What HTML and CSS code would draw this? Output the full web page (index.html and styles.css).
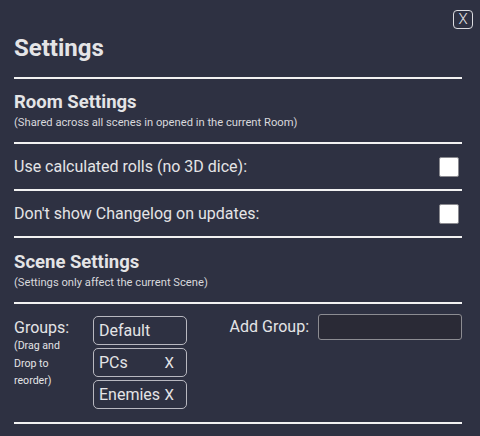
FILE: index.html
```html
<!DOCTYPE html>
<html>
<head>
<meta charset="utf-8">
<link rel="stylesheet" href="styles.css">
</head>
<body>
<div class="panel">
  <button class="close">X</button>
  <h1 class="title">Settings</h1>
  <div class="divider"></div>
  <div class="section-head">
    <h2 class="section-title">Room Settings</h2>
    <div class="section-sub">(Shared across all scenes in opened in the current Room)</div>
  </div>
  <div class="divider"></div>
  <div class="row">
    <span class="row-label">Use calculated rolls (no 3D dice):</span>
    <span class="checkbox"></span>
  </div>
  <div class="divider"></div>
  <div class="row">
    <span class="row-label">Don't show Changelog on updates:</span>
    <span class="checkbox"></span>
  </div>
  <div class="divider"></div>
  <div class="section-head scene">
    <h2 class="section-title">Scene Settings</h2>
    <div class="section-sub">(Settings only affect the current Scene)</div>
  </div>
  <div class="divider"></div>
  <div class="groups-row">
    <div class="groups-label">
      <div class="groups-main">Groups:</div>
      <div class="groups-hint">(Drag and<br>Drop to<br>reorder)</div>
    </div>
    <div class="group-list">
      <div class="group">Default</div>
      <div class="group"><span>PCs</span><span class="group-x">X</span></div>
      <div class="group"><span>Enemies</span><span class="group-x">X</span></div>
    </div>
    <div class="add-group">
      <span class="add-label">Add Group:</span>
      <span class="add-input"></span>
    </div>
  </div>
  <div class="divider"></div>
</div>
</body>
</html>
```

FILE: styles.css
```css
html, body {
  margin: 0;
  padding: 0;
  background: #2e3142;
  width: 480px;
  height: 436px;
  overflow: hidden;
}
body {
  font-family: Roboto, "Liberation Sans", sans-serif;
  color: #e4e4e6;
}
.panel {
  position: relative;
  padding: 34px 18px 0 14px;
}
.close {
  position: absolute;
  top: 10px;
  right: 7px;
  width: 20px;
  height: 19px;
  padding: 0;
  margin: 0;
  background: transparent;
  border: 1px solid #dcdce0;
  border-radius: 4px;
  color: #e4e4e6;
  font-family: Roboto, sans-serif;
  font-size: 15px;
  font-weight: 300;
  line-height: 17px;
  text-align: center;
}
.title {
  margin: 0;
  font-size: 24px;
  font-weight: 700;
  line-height: 28px;
  height: 28px;
  margin-bottom: 15px;
}
.divider {
  height: 2px;
  background: #f2f2f2;
}
.section-head {
  padding: 12px 0 13px;
}
.section-head.scene {
  padding-top: 13px;
}
.section-title {
  margin: 0;
  font-size: 18.5px;
  font-weight: 700;
  line-height: 22px;
}
.section-sub {
  margin-top: 3px;
  font-size: 11.2px;
  line-height: 13px;
  color: #d8d8dc;
}
.row {
  display: flex;
  align-items: center;
  justify-content: space-between;
  height: 45px;
  padding-right: 3px;
}
.row-label {
  font-size: 16px;
  line-height: 19px;
}
.checkbox {
  width: 18px;
  height: 18px;
  background: #ffffff;
  border: 1px solid #8a8a90;
  border-radius: 2px;
}
.groups-row {
  display: flex;
  align-items: flex-start;
  padding: 11px 0 13px;
}
.groups-label {
  width: 79px;
  padding-top: 4px;
}
.groups-main {
  font-size: 16px;
  line-height: 18px;
}
.groups-hint {
  font-size: 10.6px;
  line-height: 17.5px;
  margin-top: 0;
}
.group-list {
  display: flex;
  flex-direction: column;
  gap: 3px;
  width: 94px;
  margin-top: 1px;
}
.group {
  display: flex;
  justify-content: space-between;
  align-items: center;
  box-sizing: border-box;
  height: 29px;
  padding: 0 12px 0 5px;
  border: 1px solid #b8b8c0;
  border-radius: 5px;
  font-size: 16px;
}
.group-x {
  font-size: 15px;
}
.add-group {
  display: flex;
  align-items: center;
  margin-left: auto;
  margin-top: -1px;
  gap: 9px;
}
.add-label {
  font-size: 16px;
  line-height: 18px;
}
.add-input {
  box-sizing: border-box;
  width: 144px;
  height: 26px;
  background: #2a2a36;
  border: 1px solid #8c8c92;
  border-radius: 3px;
}
```
